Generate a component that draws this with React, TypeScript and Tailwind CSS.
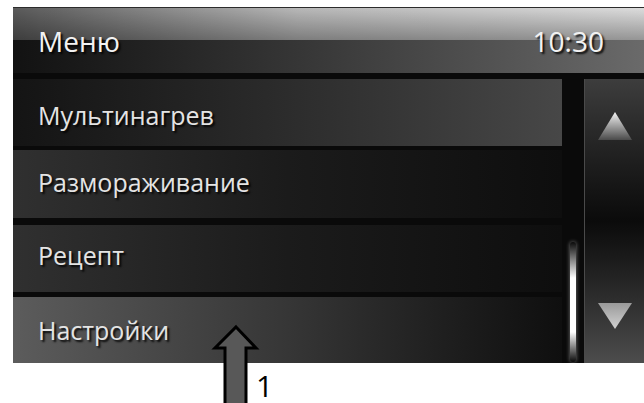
import React from 'react';

const rows = [
  {
    label: 'Мультинагрев',
    box: 'h-[67px] bg-linear-to-r from-[#141414] via-[#2c2c2c] to-[#474747]',
    text: 'translate-y-[3px]',
  },
  {
    label: 'Размораживание',
    box: 'mt-[4px] h-[68px] bg-linear-to-r from-[#303030] via-[#1b1b1b] to-[#0e0e0e]',
    text: '-translate-y-[1px]',
  },
  {
    label: 'Рецепт',
    box: 'mt-[7px] h-[67px] bg-linear-to-r from-[#303030] via-[#1b1b1b] to-[#0e0e0e]',
    text: '-translate-y-[3px]',
  },
  {
    label: 'Настройки',
    box: 'mt-[5px] h-[66px] bg-linear-to-r from-[#5c5c5c] via-[#363636] to-[#0f0f0f]',
    text: 'translate-y-[1px]',
  },
];

const shadow = '[text-shadow:2px_2px_2px_rgba(0,0,0,0.9)]';

function Triangle({ up }: { up: boolean }) {
  const id = up ? 'tri-up' : 'tri-down';
  return (
    <svg width="36" height="28" viewBox="0 0 36 28">
      <defs>
        <linearGradient id={id} x1="0" y1="0" x2="0" y2="1">
          {up ? (
            <>
              <stop offset="0" stopColor="#f4f4f4" />
              <stop offset="1" stopColor="#4a4a4a" />
            </>
          ) : (
            <>
              <stop offset="0" stopColor="#9a9a9a" />
              <stop offset="1" stopColor="#d2d2d2" />
            </>
          )}
        </linearGradient>
      </defs>
      {up ? (
        <polygon points="18,0 35,28 1,28" fill={`url(#${id})`} />
      ) : (
        <polygon points="1,0 35,0 18,26" fill={`url(#${id})`} />
      )}
    </svg>
  );
}

export default function App() {
  return (
    <div
      className="relative w-[644px] h-[403px] overflow-hidden bg-white pl-[13px] pt-[7px]"
      style={{ fontFamily: '"Open Sans", "Noto Sans", sans-serif' }}
    >
      <div className="h-[356px] bg-[#0a0a0a] flex flex-col">
        {/* title bar */}
        <div className="relative h-[66px] shrink-0 bg-linear-to-r from-[#121212] via-[#3a3a3a] to-[#6a6a6a] border-t border-[#2c2c2c]">
          <div className="absolute inset-x-0 top-0 h-[32px] bg-[linear-gradient(to_bottom,rgba(0,0,0,0),rgba(0,0,0,0.32)),linear-gradient(to_right,#5a5a5a,#b8b8b8_45%,#dcdcdc)]" />
          <div className={`relative h-full flex items-center justify-between pl-[25px] pr-[40px] text-[28px] text-[#f2f2f2] ${shadow}`}>
            <span>Меню</span>
            <span>10:30</span>
          </div>
        </div>

        <div className="mt-[6px] flex flex-1">
          {/* menu list */}
          <div className="w-[549px] flex flex-col">
            {rows.map((r) => (
              <div key={r.label} className={`${r.box} flex items-center pl-[25px]`}>
                <span className={`text-[25px] text-[#e4e4e4] ${shadow} ${r.text}`}>{r.label}</span>
              </div>
            ))}
          </div>

          {/* scroll track */}
          <div className="w-[22px] flex flex-col justify-end items-center pb-[1px]">
            <div className="w-[6px] h-[120px] rounded-full bg-[linear-gradient(to_bottom,rgba(255,255,255,0),#ffffff_30%,#ffffff_75%,rgba(255,255,255,0))] shadow-[0_0_4px_rgba(255,255,255,0.45)]" />
          </div>

          {/* page buttons */}
          <div className="flex-1 border-l border-[#4a4a4a] bg-linear-to-b from-[#3d3d3d] via-[#0b0b0b] to-[#4d4d4d] flex flex-col items-center justify-between pt-[33px] pb-[32px]">
            <Triangle up />
            <Triangle up={false} />
          </div>
        </div>
      </div>

      {/* callout */}
      <svg className="absolute left-[210px] top-[322px]" width="52" height="90" viewBox="0 0 52 90">
        <polygon
          points="26,5 46,26 36,26 36,88 15,88 15,26 5,26"
          fill="#585858"
          stroke="#000"
          strokeWidth="3"
          strokeLinejoin="miter"
        />
      </svg>
      <span className="absolute left-[256px] top-[373px] text-[30px] leading-[26px] text-black">1</span>
    </div>
  );
}
